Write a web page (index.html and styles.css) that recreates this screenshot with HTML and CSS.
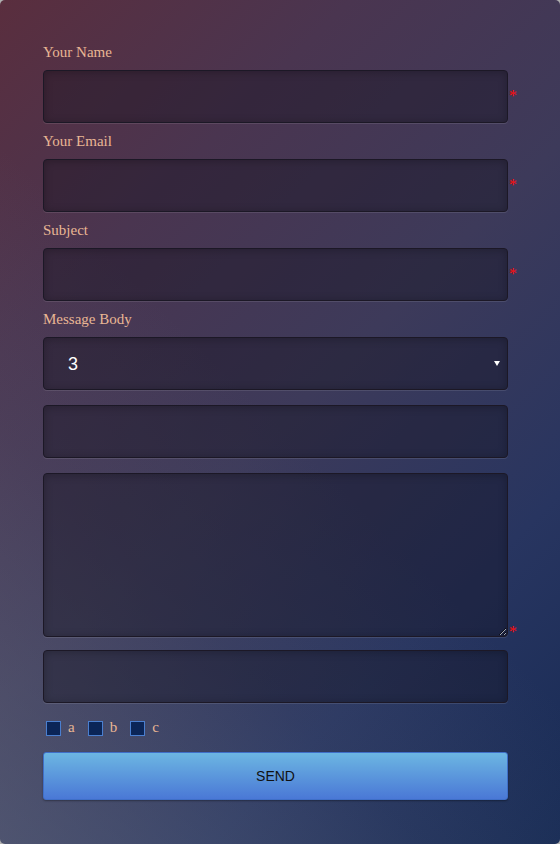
FILE: index.html
```html
<!DOCTYPE html>
<html>
<head>
<meta charset="utf-8">
<link rel="stylesheet" href="styles.css">
</head>
<body>
<form class="form">
  <label class="lbl">Your Name</label>
  <div class="row"><input class="field" type="text"><span class="req">*</span></div>
  <label class="lbl">Your Email</label>
  <div class="row"><input class="field" type="text"><span class="req">*</span></div>
  <label class="lbl">Subject</label>
  <div class="row"><input class="field" type="text"><span class="req">*</span></div>
  <label class="lbl">Message Body</label>
  <div class="row"><div class="selwrap"><select class="field sel"><option>3</option></select></div></div>
  <div class="row gap"><input class="field" type="text"></div>
  <div class="row gap bottom"><textarea class="field area"></textarea><span class="req">*</span></div>
  <div class="row gap2"><input class="field" type="text"></div>
  <div class="checks">
    <span class="ck"><span class="box"></span><span class="ckl">a</span></span>
    <span class="ck"><span class="box"></span><span class="ckl">b</span></span>
    <span class="ck"><span class="box"></span><span class="ckl">c</span></span>
  </div>
  <button class="send" type="button">SEND</button>
</form>
</body>
</html>
```
FILE: styles.css
```css
html, body {
  margin: 0;
  padding: 0;
  background: #b0b0b0;
}
.form {
  box-sizing: border-box;
  width: 560px;
  height: 844px;
  border-radius: 5px;
  padding: 42px 0 0 43px;
  background:
    linear-gradient(45deg, rgba(110,118,135,0.45) 0%, rgba(110,118,135,0.12) 30%, rgba(110,118,135,0) 50%),
    linear-gradient(135deg, #5a2e3e 0%, #4a3550 25%, #3d3a5a 50%, #283560 75%, #172b55 100%);
  font-family: "Liberation Serif", serif;
}
.lbl {
  display: block;
  font-size: 15px;
  line-height: 20px;
  color: #e9b694;
  margin-bottom: 8px;
}
.row {
  display: flex;
  align-items: center;
  margin-bottom: 8px;
}
.row.gap { margin-top: 15px; }
.row.gap2 { margin-top: 13px; }
.row.bottom { align-items: flex-end; }
.field {
  box-sizing: border-box;
  width: 465px;
  height: 53px;
  margin: 0;
  border: 1px solid #1c1826;
  border-radius: 4px;
  background: rgba(18, 16, 28, 0.38);
  box-shadow: inset 0 1px 8px rgba(0,0,0,0.25), 0 1px 0 rgba(255,255,255,0.1);
  color: #fff;
  outline: none;
}
.req {
  color: #ff0a0a;
  font-family: "Liberation Serif", serif;
  font-size: 16px;
  line-height: 10px;
  height: 8px;
  margin-left: 1px;
  margin-top: -4px;
}
.row.bottom .req { margin-bottom: 2px; }
.selwrap {
  position: relative;
  width: 465px;
  height: 53px;
}
.selwrap::after {
  content: "";
  position: absolute;
  right: 8px;
  top: 24px;
  border-left: 3px solid transparent;
  border-right: 3px solid transparent;
  border-top: 5px solid #fff;
}
.sel {
  -webkit-appearance: none;
  appearance: none;
  font-family: "Liberation Sans", Arial, sans-serif;
  font-size: 18px;
  padding-left: 24px;
}
.sel option { background: #2a2a3a; }
.area {
  height: 164px;
  resize: both;
  display: block;
}
.checks {
  display: flex;
  align-items: center;
  margin: 17px 0 0 3px;
  height: 16px;
}
.ck {
  display: flex;
  align-items: center;
  margin-right: 13px;
}
.box {
  box-sizing: border-box;
  width: 15px;
  height: 15px;
  background: #0b2557;
  border: 1px solid #4a7fd0;
}
.ckl {
  margin-left: 7px;
  font-size: 15px;
  line-height: 16px;
  color: #e9b694;
  margin-top: -2px;
}
.send {
  display: block;
  box-sizing: border-box;
  width: 465px;
  height: 48px;
  margin-top: 16px;
  border: 1px solid #3f6fc8;
  border-radius: 3px;
  background: linear-gradient(#6cb6e2, #4a78d6);
  box-shadow: 0 1px 2px rgba(0,0,0,0.35);
  font-family: "Liberation Sans", Arial, sans-serif;
  font-size: 14px;
  color: #111;
  padding: 0;
}
```
